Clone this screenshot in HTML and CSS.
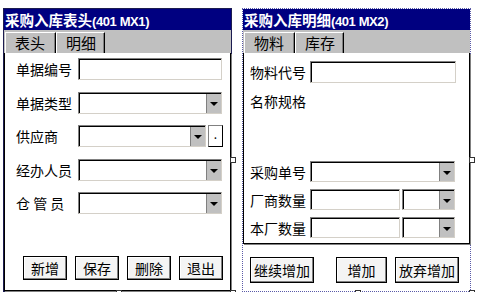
FILE: index.html
```html
<!DOCTYPE html>
<html lang="zh-CN">
<head>
    <meta charset="UTF-8">
    <title>采购入库</title>
    <link rel="stylesheet" href="styles.css">
</head>
<body>
    <div class="screens">
        <div class="window window-solid">
            <div class="titlebar">采购入库表头<span class="code">(401 MX1)</span></div>
            <div class="tabstrip">
                <div class="tab tab-active">表头</div>
                <div class="tab">明细</div>
            </div>
            <div class="panel panel-head">
                <div class="row">
                    <label class="label">单据编号</label>
                    <div class="input"></div>
                </div>
                <div class="row">
                    <label class="label">单据类型</label>
                    <div class="select"><span class="drop"></span></div>
                </div>
                <div class="row">
                    <label class="label">供应商</label>
                    <div class="select select-short"><span class="drop"></span></div>
                    <div class="dot-btn">.</div>
                </div>
                <div class="row">
                    <label class="label">经办人员</label>
                    <div class="select"><span class="drop"></span></div>
                </div>
                <div class="row">
                    <label class="label">仓&nbsp;管&nbsp;员</label>
                    <div class="select"><span class="drop"></span></div>
                </div>
                <div class="actions">
                    <button class="btn">新增</button>
                    <button class="btn">保存</button>
                    <button class="btn">删除</button>
                    <button class="btn">退出</button>
                </div>
            </div>
            <span class="handle handle-bottom"></span>
            <span class="handle handle-right"></span>
            <span class="handle handle-corner"></span>
        </div>

        <div class="window window-dotted">
            <div class="titlebar">采购入库明细<span class="code">(401 MX2)</span></div>
            <div class="tabstrip">
                <div class="tab tab-active">物料</div>
                <div class="tab">库存</div>
            </div>
            <div class="panel panel-detail">
                <div class="row row-first">
                    <label class="label">物料代号</label>
                    <div class="input"></div>
                </div>
                <div class="row row-text">
                    <label class="label">名称规格</label>
                </div>
                <div class="row row-order">
                    <label class="label">采购单号</label>
                    <div class="select"><span class="drop"></span></div>
                </div>
                <div class="row">
                    <label class="label">厂商数量</label>
                    <div class="input input-qty"></div>
                    <div class="select select-unit"><span class="drop"></span></div>
                </div>
                <div class="row">
                    <label class="label">本厂数量</label>
                    <div class="input input-qty"></div>
                    <div class="select select-unit"><span class="drop"></span></div>
                </div>
            </div>
            <div class="footer">
                <button class="btn btn-wide">继续增加</button>
                <button class="btn btn-mid">增加</button>
                <button class="btn btn-wide">放弃增加</button>
            </div>
            <span class="handle handle-bottom"></span>
            <span class="handle handle-right"></span>
            <span class="handle handle-corner"></span>
        </div>
    </div>
</body>
</html>
```

FILE: styles.css
```css
body {
    margin: 0;
    background: #fff;
    color: #000;
    font-family: "Noto Sans CJK SC", "Noto Sans", sans-serif;
}
.screens {
    display: flex;
    gap: 10px;
    padding: 8px 0 0 3px;
}
.window {
    position: relative;
    width: 229px;
    height: 284px;
    box-sizing: border-box;
    display: flex;
    flex-direction: column;
}
.window-solid {
    border: 1px solid #1c1c50;
}
.window-dotted {
    border: 1px dotted #5a5aa8;
}
.titlebar {
    height: 21px;
    flex: none;
    background: #000080;
    color: #fff;
    font-weight: bold;
    font-size: 14.5px;
    line-height: 21px;
    padding-left: 1px;
    white-space: nowrap;
    overflow: hidden;
}
.titlebar .code {
    font-family: "Liberation Sans", Arial, sans-serif;
    font-size: 13px;
    letter-spacing: -0.4px;
}
.tabstrip {
    height: 23px;
    flex: none;
    display: flex;
    align-items: flex-end;
    padding-left: 1px;
    background: #c0c0c0;
}
.tab {
    height: 20px;
    padding: 0 8px 0 9px;
    font-size: 15px;
    line-height: 20px;
    background: #c0c0c0;
    border-top: 1px solid #fff;
    border-left: 1px solid #fff;
    border-right: 1px solid #000;
    box-shadow: inset -1px 0 #808080;
}
.tab-active {
    padding: 0 10px 0 9px;
}
.panel {
    background: #fff;
    border: 1px solid #000;
    border-top: 0;
    box-shadow: 1px 1px #808080;
    display: flex;
    flex-direction: column;
}
.panel-head {
    flex: 1;
    padding: 5px 0 0 11px;
    gap: 11.5px;
}
.panel-detail {
    padding: 8px 0 5px 6px;
}
.row {
    display: flex;
    align-items: center;
    height: 22px;
}
.label {
    width: 62px;
    flex: none;
    font-size: 14px;
    white-space: nowrap;
}
.panel-detail .label {
    width: 60px;
}
.panel-detail .row {
    height: 21px;
    margin-top: 7px;
}
.panel-detail .row-first {
    height: 22px;
    margin-top: 0;
}
.panel-detail .row-text {
    margin-top: 8px;
    height: 20px;
}
.panel-detail .row-order {
    margin-top: 50px;
}
.input,
.select {
    position: relative;
    height: 100%;
    box-sizing: border-box;
    background: #fff;
    border: 1px solid #808080;
    border-right-color: #d4d0c8;
    border-bottom-color: #d4d0c8;
    box-shadow: inset 1px 1px #000;
}
.input {
    width: 144px;
}
.select {
    width: 144px;
}
.panel-detail .input {
    width: 146px;
}
.panel-detail .select {
    width: 145px;
}
.select-short {
    width: 128px;
}
.panel-detail .input-qty {
    width: 90px;
}
.panel-detail .select-unit {
    width: 53px;
    margin-left: 2px;
}
.drop {
    position: absolute;
    top: 1px;
    right: 0;
    bottom: 0;
    width: 14px;
    background: #c0c0c0;
    border-left: 1px solid #808080;
}
.drop::after {
    content: "";
    position: absolute;
    left: 3px;
    top: 8px;
    border-left: 4px solid transparent;
    border-right: 4px solid transparent;
    border-top: 4px solid #000;
}
.dot-btn {
    width: 15px;
    height: 22px;
    margin-left: 2px;
    box-sizing: border-box;
    border: 1px solid #000;
    border-top-color: #808080;
    border-left-color: #808080;
    font-size: 12px;
    line-height: 16px;
    text-align: center;
}
.actions {
    display: flex;
    gap: 8px;
    margin-top: auto;
    margin-bottom: 10px;
    padding-left: 7px;
}
.btn {
    width: 44px;
    height: 24px;
    padding: 0;
    font-family: inherit;
    font-size: 14px;
    color: #000;
    background: #f4f4f4;
    border: 1px solid #000;
    box-shadow: inset -1px -1px #808080, inset 1px 1px #fff;
}
.footer {
    display: flex;
    padding: 13px 0 0 7px;
}
.btn-wide {
    width: 64px;
    height: 26px;
}
.btn-mid {
    width: 51px;
    height: 26px;
    margin: 0 8px 0 22px;
}
.handle {
    position: absolute;
    width: 6px;
    height: 6px;
    box-sizing: border-box;
    background: #fff;
    border: 1px solid #333;
}
.handle-bottom {
    left: 112px;
    bottom: -5px;
}
.handle-right {
    right: -5px;
    top: 148px;
}
.handle-corner {
    right: -5px;
    bottom: -5px;
}
```
